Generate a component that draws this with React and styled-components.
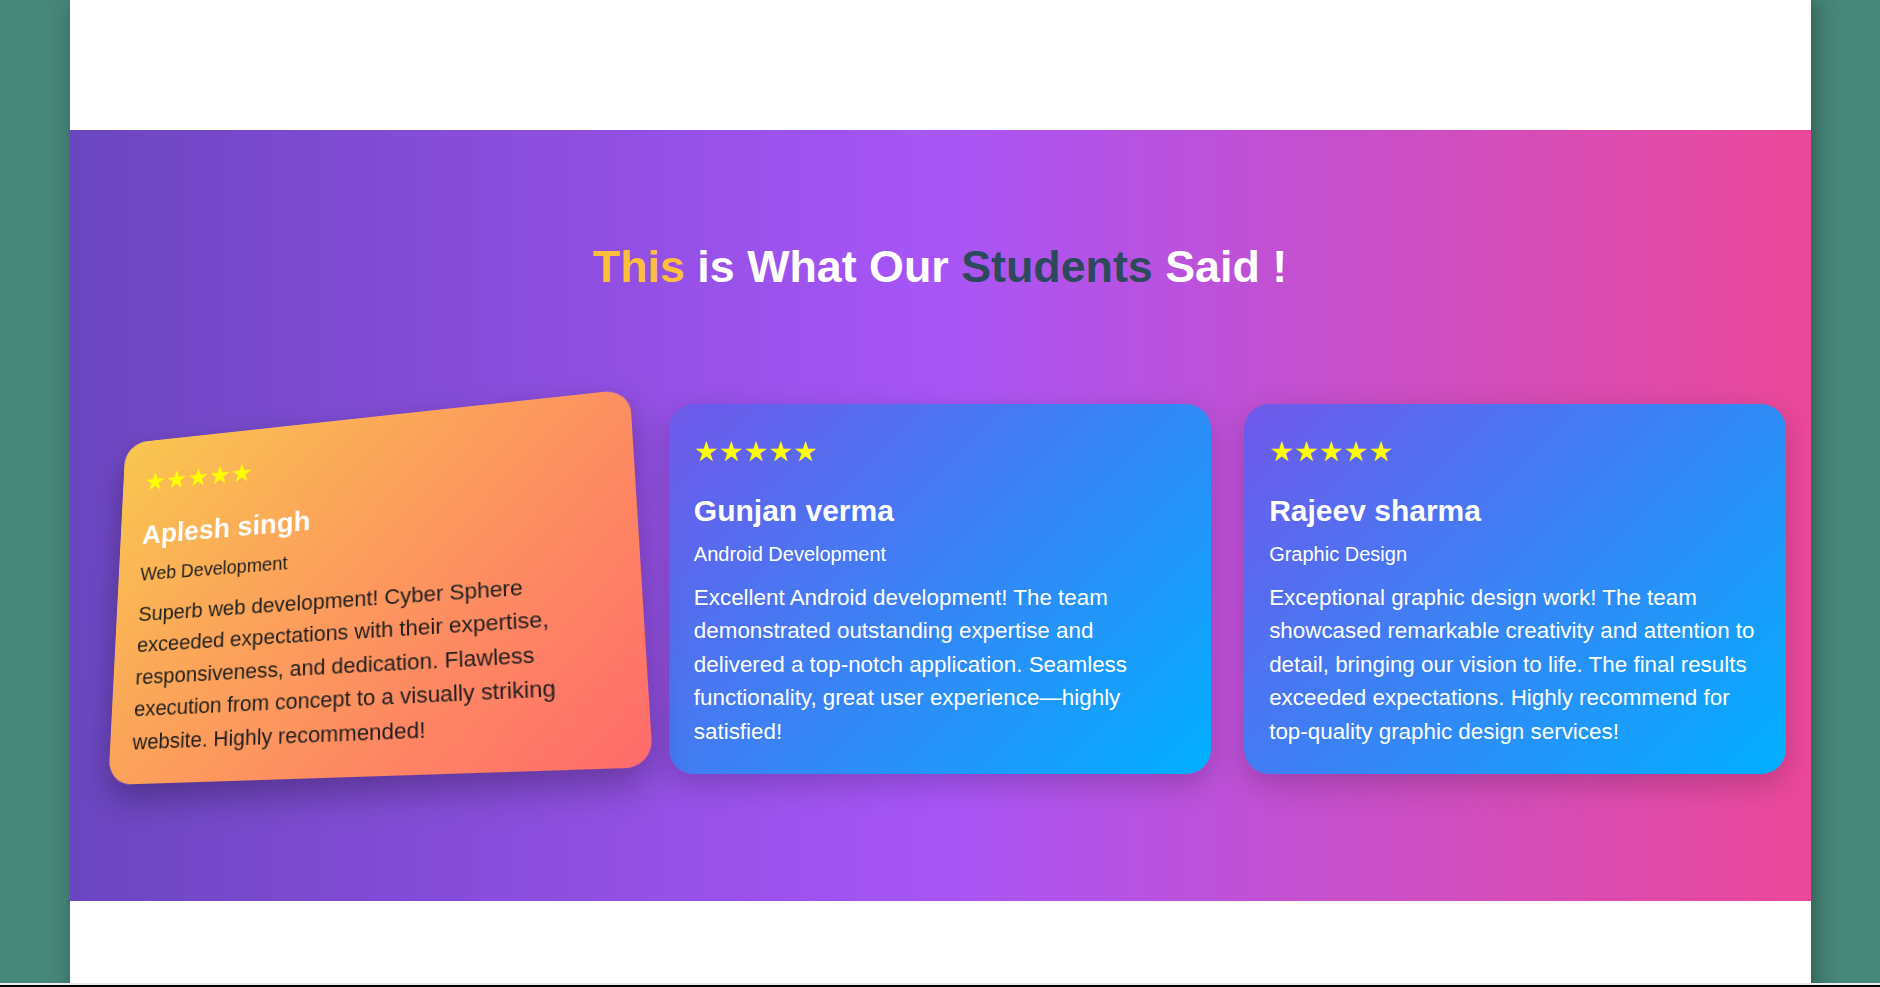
import React from "react"
import styled, { createGlobalStyle } from "styled-components"

const GlobalStyle = createGlobalStyle`
    body {
        margin: 0;
        background: #468779;
        font-family: "Liberation Sans", Arial, sans-serif;
    }
`

const Page = styled.div`
    width: 1741px;
    min-height: 100vh;
    margin: 0 auto;
    background: #ffffff;
    box-shadow: 4px 0 20px rgba(0, 0, 0, 0.35);
`

const TopSpace = styled.div`
    height: 130px;
`

const Section = styled.section`
    padding: 111px 24px 127px;
    background: linear-gradient(90deg, #6b46c1 0%, #a855f7 50%, #ec4899 100%);
`

const Title = styled.h2`
    margin: 0 0 112px;
    text-align: center;
    font-size: 44.8px;
    font-weight: 700;
    color: #ffffff;
`

const Accent = styled.span`
    color: ${p => p.$color};
`

const Grid = styled.div`
    display: grid;
    grid-template-columns: repeat(3, 1fr);
    gap: 33px;
`

const Card = styled.article`
    padding: 25px;
    border-radius: 25px;
    color: #ffffff;
    background: linear-gradient(135deg, #7058ea 0%, #00b0ff 100%);
    box-shadow: 0 10px 30px rgba(0, 0, 0, 0.2);

    ${p => p.$tilted && `
        color: #1f1f1f;
        background: linear-gradient(135deg, #f9c74f 0%, #ff6b6b 100%);
        box-shadow: 0 15px 35px rgba(0, 0, 0, 0.3);
        transform-origin: 0 0;
        /* hovered tilt, fitted to the card's four corners */
        transform: matrix3d(0.83103, -0.09771, 0, -0.00018519, -0.04946, 0.85030, 0, -0.00019068, 0, 0, 1, 0, 31.5, 39.5, 0, 1);
    `}
`

const Stars = styled.div`
    font-family: "DejaVu Sans", sans-serif;
    font-size: 27.7px;
    line-height: 36px;
    color: #ffff00;
    margin: 5px 0 24px;
`

const Name = styled.h3`
    margin: 0 0 14.5px;
    font-size: 30px;
    font-weight: 700;
    color: #ffffff;
`

const Role = styled.p`
    margin: 0 0 15px;
    font-size: 20px;
`

const Quote = styled.p`
    margin: 0;
    font-size: 22.4px;
    line-height: 1.5;
`

const BottomSpace = styled.div`
    height: 120px;
`

const WindowEdge = styled.div`
    position: fixed;
    left: 0;
    right: 0;
    bottom: 0;
    height: 2px;
    border-top: 2px solid #ebebeb;
    background: #000000;
`

const reviews = [
    {
        name: "Aplesh singh",
        role: "Web Development",
        text: "Superb web development! Cyber Sphere exceeded expectations with their expertise, responsiveness, and dedication. Flawless execution from concept to a visually striking website. Highly recommended!",
        tilted: true,
    },
    {
        name: "Gunjan verma",
        role: "Android Development",
        text: "Excellent Android development! The team demonstrated outstanding expertise and delivered a top-notch application. Seamless functionality, great user experience—highly satisfied!",
    },
    {
        name: "Rajeev sharma",
        role: "Graphic Design",
        text: "Exceptional graphic design work! The team showcased remarkable creativity and attention to detail, bringing our vision to life. The final results exceeded expectations. Highly recommend for top-quality graphic design services!",
    },
]

export default function App() {
    return <>
        <GlobalStyle />
        <Page>
            <TopSpace />
            <Section>
                <Title>
                    <Accent $color="#fbbf3c">This</Accent> is What Our <Accent $color="#2c4a5c">Students</Accent> Said !
                </Title>
                <Grid>
                    {reviews.map(r => (
                        <Card key={r.name} $tilted={r.tilted}>
                            <Stars>★★★★★</Stars>
                            <Name>{r.name}</Name>
                            <Role>{r.role}</Role>
                            <Quote>{r.text}</Quote>
                        </Card>
                    ))}
                </Grid>
            </Section>
            <BottomSpace />
        </Page>
        <WindowEdge />
    </>
}
